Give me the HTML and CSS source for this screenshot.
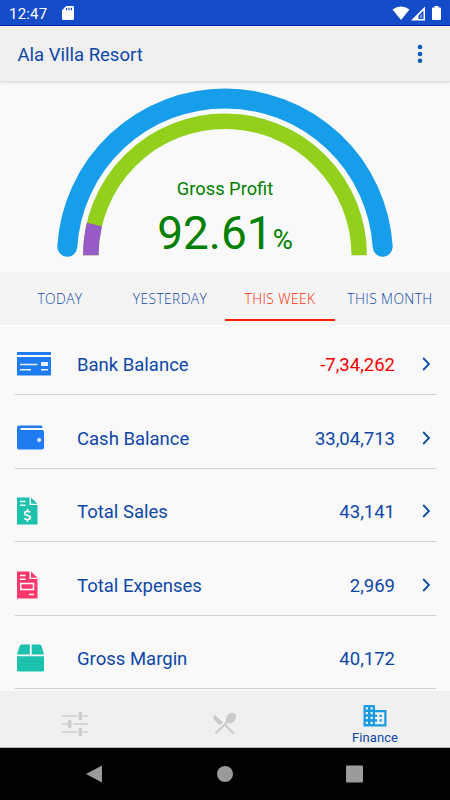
FILE: index.html
```html
<!DOCTYPE html>
<html lang="en">
<head>
    <meta charset="UTF-8">
    <meta name="viewport" content="width=device-width, initial-scale=1.0">
    <title>Ala Villa Resort</title>
    <link rel="stylesheet" href="styles.css">
</head>
<body>

<div class="status-bar">
    <span class="clock">12:47</span>
    <svg class="sd-card" width="12" height="14" viewBox="0 0 12 14">
        <path fill="#fff" d="M4.2 0H10.8Q12 0 12 1.2V12.8Q12 14 10.8 14H1.2Q0 14 0 12.8V4.2Z"/>
        <path stroke="#144bc8" stroke-width="1.2" d="M4.6 1.8V4.2M7 1.8V4.2M9.4 1.8V4.2"/>
    </svg>
    <svg class="signals" width="50" height="16" viewBox="0 0 50 16">
        <path fill="#fff" d="M0.500 3.600Q9-2.800 17.500 3.600L9 14Z"/>
        <path fill="#fff" fill-rule="evenodd" d="M19 14.500L33 .5V14.500ZM26.500 13H31.500V4.500L26.500 9.500Z"/>
        <path fill="#fff" d="M28 12V9.800L30.200 7.600V12Z" opacity=".45"/>
        <path fill="#fff" d="M42.500 0H46.500V1.500H48Q49 1.500 49 2.500V13Q49 14 48 14H41Q40 14 40 13V2.500Q40 1.500 41 1.500H42.500Z"/>
    </svg>
</div>

<div class="app-bar">
    <h1>Ala Villa Resort</h1>
    <svg width="6" height="20" viewBox="0 0 6 20" fill="#0a5bb5">
        <circle cx="3" cy="3" r="2.3"/>
        <circle cx="3" cy="10" r="2.3"/>
        <circle cx="3" cy="16.800" r="2.3"/>
    </svg>
</div>

<div class="gauge">
    <svg class="arcs" width="450" height="190" viewBox="0 82 450 190" fill="none">
        <path stroke="#179eeb" stroke-width="20" stroke-linecap="round" d="M67.3 246.700A158 158 0 0 1 382.700 246.700"/>
        <path stroke="#92d01c" stroke-width="15.500" d="M90.800 255.300A134.200 134.200 0 0 1 359.200 255.300"/>
        <path stroke="#965bc6" stroke-width="15.500" d="M90.800 255.300A134.200 134.200 0 0 1 94.400 224.500"/>
    </svg>
    <div class="gauge-text">
        <div class="gauge-label">Gross Profit</div>
        <div class="gauge-value">92.61<span class="percent">%</span></div>
    </div>
</div>

<div class="tabs">
    <div class="tab">TODAY</div>
    <div class="tab">YESTERDAY</div>
    <div class="tab active">THIS WEEK</div>
    <div class="tab">THIS MONTH</div>
</div>

<div class="list">
    <div class="row">
        <svg class="icon" width="36" height="28" viewBox="0 0 36 28">
            <path fill="#1e7bf0" d="M0 2H34V5H0ZM0 7H34V24.500Q34 25.500 33 25.500H1Q0 25.500 0 24.500Z"/>
            <path fill="#e8f2ff" d="M3 13.700H20.500V15.300H3ZM3 19H14V20.600H3ZM24 12H31V16H24ZM24 19H31V20.600H24Z"/>
        </svg>
        <span class="name">Bank Balance</span>
        <span class="amount negative">-7,34,262</span>
        <svg class="chevron" width="9" height="14" viewBox="0 0 9 14"><path d="M1.200 1L7 7L1.200 13"/></svg>
    </div>
    <div class="row">
        <svg class="icon" width="36" height="28" viewBox="0 0 36 28">
            <path fill="#1e7bf0" d="M2 1.500H24Q25.500 1.500 25.500 3.200V4H4.500Q3.200 4 3.200 5T4.500 6H25.500Q27 6 27 8V23.500Q27 25.500 25 25.500H2Q0 25.500 0 23.500V3.500Q0 1.500 2 1.500Z"/>
            <circle cx="22.200" cy="16" r="1.900" fill="#fff"/>
        </svg>
        <span class="name">Cash Balance</span>
        <span class="amount">33,04,713</span>
        <svg class="chevron" width="9" height="14" viewBox="0 0 9 14"><path d="M1.200 1L7 7L1.200 13"/></svg>
    </div>
    <div class="row">
        <svg class="icon" width="36" height="28" viewBox="0 0 36 28">
            <path fill="#1cc2ad" d="M0 .5H12.500V8H20.500V27.500H0ZM14 .5L20.500 6.800H14Z"/>
            <path fill="#f9f9f9" d="M3 3.800H8.500V5.200H3ZM3 7.500H8.500V8.900H3Z"/>
            <path fill="none" stroke="#f9f9f9" stroke-width="1.700" d="M13.300 15.300Q12.500 14.300 10.500 14.300Q7.700 14.300 7.700 16.200Q7.700 17.800 10.300 18.300Q13.300 18.800 13.300 20.600Q13.300 22.500 10.500 22.500Q8.300 22.500 7.300 21.200M10.500 12V14.500M10.500 22V24.800"/>
        </svg>
        <span class="name">Total Sales</span>
        <span class="amount">43,141</span>
        <svg class="chevron" width="9" height="14" viewBox="0 0 9 14"><path d="M1.200 1L7 7L1.200 13"/></svg>
    </div>
    <div class="row">
        <svg class="icon" width="36" height="28" viewBox="0 0 36 28">
            <path fill="#fb3869" d="M0 .5H12.500V8H20.500V27.500H0ZM14 .5L20.500 6.800H14Z"/>
            <path fill="#fff" d="M3 3.800H8.500V5.200H3ZM3 7.500H8.500V8.900H3ZM12 22.700H17V24.200H12Z"/>
            <path fill="none" stroke="#fff" stroke-width="1.500" d="M3.800 12.600H16.500V18.500H3.800Z"/>
        </svg>
        <span class="name">Total Expenses</span>
        <span class="amount">2,969</span>
        <svg class="chevron" width="9" height="14" viewBox="0 0 9 14"><path d="M1.200 1L7 7L1.200 13"/></svg>
    </div>
    <div class="row">
        <svg class="icon" width="36" height="28" viewBox="0 0 36 28">
            <path fill="#1cc2ad" d="M4.500 .5H12.800V10.500H0L2.700 2Q3.200 .5 4.500 .5ZM14.700 .5H22.800Q24 .5 24.500 2L27 10.500H14.700ZM0 12.300H27V26Q27 27.500 25.500 27.500H1.500Q0 27.500 0 26Z"/>
        </svg>
        <span class="name">Gross Margin</span>
        <span class="amount">40,172</span>
        <span class="chevron"></span>
    </div>
</div>

<div class="bottom-nav">
    <div class="nav-item">
        <svg width="26" height="26" viewBox="0 0 26 26" fill="none" stroke="#cbcbcb" stroke-linecap="round">
            <path stroke-width="1.700" d="M1 5H15M22 5H25M1 13H5M12 13H25M1 21H15M22 21H25"/>
            <path stroke-width="3.600" d="M18.400 2.600V7.400M7.700 10.600V15.400M18.400 18.600V23.400"/>
        </svg>
    </div>
    <div class="nav-item">
        <svg width="24" height="24" viewBox="0 0 24 24">
            <path fill="#cbcbcb" d="M1.500 2.500L10 10.300L6.800 13.500L1.800 8.500Q-.9 5.500 1.500 2.500Z"/>
            <path stroke="#cbcbcb" stroke-width="2" fill="none" d="M2.500 21.500L16 8M11.500 12.500L21 21.800"/>
            <ellipse cx="18" cy="6" rx="4.400" ry="5.800" transform="rotate(42 18 6)" fill="#cbcbcb"/>
        </svg>
    </div>
    <div class="nav-item active">
        <svg width="24" height="22" viewBox="0 0 24 22">
            <path fill="#179be3" fill-rule="evenodd" d="M.5 0H12V5H23.500V21.500H.5ZM2.700 2.300H5V4.500H2.700ZM7.500 2.300H9.800V4.500H7.500ZM2.700 7H5V9.300H2.700ZM7.500 7H9.800V9.300H7.500ZM2.700 11.800H5V14H2.700ZM7.500 11.800H9.800V14H7.500ZM2.700 16.700H5V19H2.700ZM7.500 16.700H9.800V19H7.500ZM12 7.200H21.300V19.200H12V16.700H14V14.300H12V12H14V9.600H12Z"/>
            <path fill="#179be3" d="M16.500 9.800H18.800V12H16.500ZM16.500 14.300H18.800V16.500H16.500Z"/>
        </svg>
        <span>Finance</span>
    </div>
</div>

<div class="system-nav">
    <svg width="450" height="52" viewBox="0 0 450 52" fill="#9b9b9b">
        <path d="M102 17.500V34.500L86 26Z"/>
        <circle cx="225" cy="26" r="8"/>
        <rect x="346" y="17.500" width="17" height="17" rx="1"/>
    </svg>
</div>

</body>
</html>
```
FILE: styles.css
```css
* {
    box-sizing: border-box;
}
body {
    font-family: Roboto, sans-serif;
    margin: 0;
    width: 450px;
    height: 800px;
    display: flex;
    flex-direction: column;
    overflow: hidden;
    background-color: #f9f9f9;
    color: #0d47a8;
}
svg {
    display: block;
}
.status-bar {
    height: 26px;
    flex: none;
    display: flex;
    align-items: flex-start;
    padding: 6px 8px 0 9px;
    background: #144bc8;
    border-bottom: 1px solid #0423b4;
    color: white;
}
.clock {
    width: 53px;
    font-size: 15px;
    line-height: 16px;
    letter-spacing: 0.2px;
}
.signals {
    margin-left: auto;
}
.app-bar {
    height: 56px;
    flex: none;
    display: flex;
    align-items: center;
    justify-content: space-between;
    padding: 0 27px 0 17.5px;
    background: #f0f0f0;
    border-bottom: 1px solid #e2e2e2;
    box-shadow: 0 1px 3px rgba(0, 0, 0, 0.1);
}
.app-bar h1 {
    margin: 0;
    padding-top: 3px;
    font-size: 18.5px;
    font-weight: 400;
}
.gauge {
    height: 190px;
    flex: none;
    display: grid;
}
.arcs,
.gauge-text {
    grid-area: 1 / 1; /* text sits inside the arcs */
}
.gauge-text {
    padding-top: 95px;
    text-align: center;
    color: #008000;
}
.gauge-label {
    font-size: 18.3px;
    line-height: 23px;
}
.gauge-value {
    font-size: 46px;
    line-height: 66px;
}
.percent {
    font-size: 27.5px;
}
.tabs {
    height: 54px;
    flex: none;
    display: grid;
    grid-template-columns: repeat(4, 110px);
    padding-left: 5px;
    background: #f4f4f4;
    border-bottom: 1px solid #fdfdfd;
}
.tab {
    height: 49px;
    font-family: "Open Sans", sans-serif;
    font-size: 13.8px;
    font-weight: 350;
    line-height: 54px;
    letter-spacing: 0.4px;
    text-align: center;
    white-space: nowrap;
}
.tab.active {
    color: #ff2800;
    border-bottom: 2px solid #ff1e00;
}
.list {
    height: 365px;
    flex: none;
    padding: 0 14px 0 15px;
    overflow: hidden;
}
.row {
    height: 73.5px;
    display: flex;
    align-items: center;
    padding: 13px 5px 0 2px;
    border-bottom: 1px solid #cfcfcf;
    font-size: 18.5px;
}
.row:first-child {
    height: 69px;
    padding-top: 8px;
}
.icon {
    margin-right: 24px;
}
.name,
.amount {
    padding-top: 2px;
}
.name {
    flex: 1;
}
.negative {
    color: #f50000;
}
.chevron {
    width: 9px;
    margin-left: 27px;
    fill: none;
    stroke: #0d4da8;
    stroke-width: 1.8;
}
.bottom-nav {
    height: 57px;
    flex: none;
    display: grid;
    grid-template-columns: repeat(3, 1fr);
    background: #f0f0f0;
    border-bottom: 1px solid #b8b8b8;
}
.nav-item {
    display: flex;
    flex-direction: column;
    align-items: center;
    justify-content: center;
    padding-top: 9px;
    font-size: 13px;
    line-height: 16px;
    letter-spacing: 0.1px;
}
.nav-item.active {
    gap: 3px;
    padding-top: 12px;
}
.system-nav {
    height: 52px;
    flex: none;
    background: black;
}
```
